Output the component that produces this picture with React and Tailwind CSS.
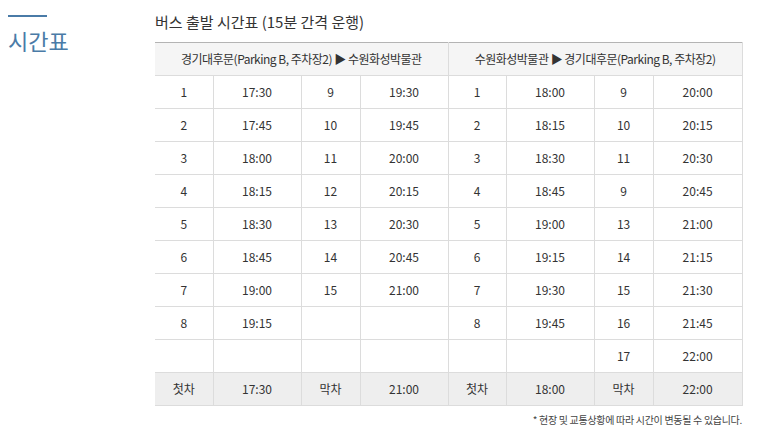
const toSuwon = [
  ['1', '17:30', '9', '19:30'],
  ['2', '17:45', '10', '19:45'],
  ['3', '18:00', '11', '20:00'],
  ['4', '18:15', '12', '20:15'],
  ['5', '18:30', '13', '20:30'],
  ['6', '18:45', '14', '20:45'],
  ['7', '19:00', '15', '21:00'],
  ['8', '19:15', '', ''],
  ['', '', '', ''],
]

const toKyonggi = [
  ['1', '18:00', '9', '20:00'],
  ['2', '18:15', '10', '20:15'],
  ['3', '18:30', '11', '20:30'],
  ['4', '18:45', '9', '20:45'],
  ['5', '19:00', '13', '21:00'],
  ['6', '19:15', '14', '21:15'],
  ['7', '19:30', '15', '21:30'],
  ['8', '19:45', '16', '21:45'],
  ['', '', '17', '22:00'],
]

const cell = 'h-[33px] border-b border-r border-[#dcdcdc] text-center p-0'

export default function App() {
  return (
    <div className="flex w-[757px] h-[438px] bg-white text-[#333]"
      style={{ fontFamily: '"Noto Sans CJK KR", "Noto Sans", sans-serif' }}>
      <div className="w-[155px] shrink-0 pl-2 pt-[15px]">
        <div className="w-[39px] h-[2px] bg-[#4a7ba7]" />
        <h1 className="mt-[8px] text-[22px] leading-[30px] text-[#4a7ba7]">시간표</h1>
      </div>

      <div className="w-[587px] pt-[10px]">
        <h2 className="text-[15px] leading-[24px] text-[#333]">버스 출발 시간표 (15분 간격 운행)</h2>

        <table className="mt-[8px] w-[587px] border-collapse table-fixed text-[12px] border-t border-[#b4b4b4]">
          <colgroup>
            <col className="w-[58px]" />
            <col className="w-[88px]" />
            <col className="w-[59px]" />
            <col className="w-[88px]" />
            <col className="w-[58px]" />
            <col className="w-[88px]" />
            <col className="w-[59px]" />
            <col className="w-[89px]" />
          </colgroup>
          <thead>
            <tr className="bg-[#f5f5f5]">
              <th colSpan={4} className={cell + ' font-normal tracking-[-0.5px]'}>
                경기대후문(Parking B, 주차장2) ▶ 수원화성박물관
              </th>
              <th colSpan={4} className={cell + ' font-normal tracking-[-0.5px]'}>
                수원화성박물관 ▶ 경기대후문(Parking B, 주차장2)
              </th>
            </tr>
          </thead>
          <tbody>
            {toSuwon.map((row, i) => (
              <tr key={i}>
                {row.concat(toKyonggi[i]).map((v, j) => (
                  <td key={j} className={cell}>{v}</td>
                ))}
              </tr>
            ))}
            <tr className="bg-[#eeeeee]">
              {['첫차', '17:30', '막차', '21:00', '첫차', '18:00', '막차', '22:00'].map((v, j) => (
                <td key={j} className={cell}>{v}</td>
              ))}
            </tr>
          </tbody>
        </table>

        <p className="mt-[7px] text-right text-[10px] leading-[14px] text-[#444] tracking-[-0.3px]">
          * 현장 및 교통상황에 따라 시간이 변동될 수 있습니다.
        </p>
      </div>
    </div>
  )
}
